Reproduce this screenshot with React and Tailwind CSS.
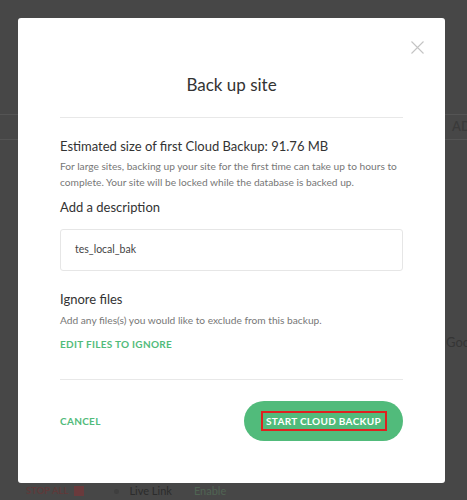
import React from 'react';

const font = { fontFamily: 'Lato, "Open Sans", sans-serif' };

function CloseIcon() {
  return (
    <svg width="13" height="13" viewBox="0 0 13 13" className="text-[#c4c4c4]">
      <path d="M0.5 0.5 L12.5 12.5 M12.5 0.5 L0.5 12.5" stroke="currentColor" strokeWidth="1.1" fill="none" />
    </svg>
  );
}

function Backdrop() {
  return (
    <div className="absolute inset-0 flex flex-col bg-[#474747]">
      <div className="h-[114px]" />
      <div className="flex h-[26px] items-center border-y border-[#545454] pl-[452px] text-[13px] font-semibold text-[#3a3a3a]">
        AD
      </div>
      <div className="h-[193px]" />
      <div className="pl-[446px] text-[13px] text-[#353535]">Goo</div>
      <div className="flex-1" />
      <div className="flex h-[18px] items-center pl-[26px]">
        <span className="text-[9.5px] font-bold text-[#5e3a3a]">STOP ALL</span>
        <span className="ml-[6px] h-[10px] w-[10px] bg-[#6a3a3c]" />
        <span className="ml-[30px] h-[5px] w-[5px] rounded-full bg-[#3f3f3f]" />
        <span className="ml-[10px] text-[11px] text-[#2c2c2c]">Live Link</span>
        <span className="ml-[22px] text-[11px] text-[#506453]">Enable</span>
      </div>
    </div>
  );
}

export default function App() {
  return (
    <div className="relative h-[500px] w-[467px] overflow-hidden" style={font}>
      <Backdrop />
      <div className="absolute left-[18px] top-[18px] w-[427px] rounded-[3px] bg-white px-[42px] pb-[42px] pt-[55px]">
        <button className="absolute right-[21px] top-[23px]">
          <CloseIcon />
        </button>
        <h2 className="text-center text-[17px] leading-[24px] text-[#333]">Back up site</h2>
        <div className="mt-[20px] h-px bg-[#e8e8e8]" />
        <h3 className="mt-[18px] text-[13px] leading-[20px] text-[#333]">
          Estimated size of first Cloud Backup: 91.76 MB
        </h3>
        <p className="mt-[2px] text-[10.2px] leading-[16px] text-[#777]">
          For large sites, backing up your site for the first time can take up to hours to complete. Your site will be locked while the database is backed up.
        </p>
        <h3 className="mt-[7px] text-[13px] leading-[20px] text-[#333]">Add a description</h3>
        <div className="mt-[12px] flex h-[42px] items-center rounded-[3px] border border-[#e6e6e6] px-[14px] text-[10.5px] text-[#444]">
          tes_local_bak
        </div>
        <h3 className="mt-[18px] text-[13px] leading-[20px] text-[#333]">Ignore files</h3>
        <p className="mt-[3px] text-[10.2px] leading-[16px] text-[#777]">
          Add any files(s) you would like to exclude from this backup.
        </p>
        <div className="mt-[9px] text-[10px] font-bold leading-[14px] tracking-[0.3px] text-[#51bb7b]">
          EDIT FILES TO IGNORE
        </div>
        <div className="mt-[28px] h-px bg-[#e8e8e8]" />
        <div className="mt-[21px] flex items-center justify-between">
          <span className="text-[10px] font-bold tracking-[0.3px] text-[#51bb7b]">CANCEL</span>
          <button className="flex h-[40px] w-[159px] items-center justify-center rounded-full bg-[#51bb7b]">
            <span className="flex h-[20px] w-[126px] items-center justify-center border-2 border-[#e0201f] text-[10px] font-bold tracking-[0.3px] text-white">
              START CLOUD BACKUP
            </span>
          </button>
        </div>
      </div>
    </div>
  );
}
